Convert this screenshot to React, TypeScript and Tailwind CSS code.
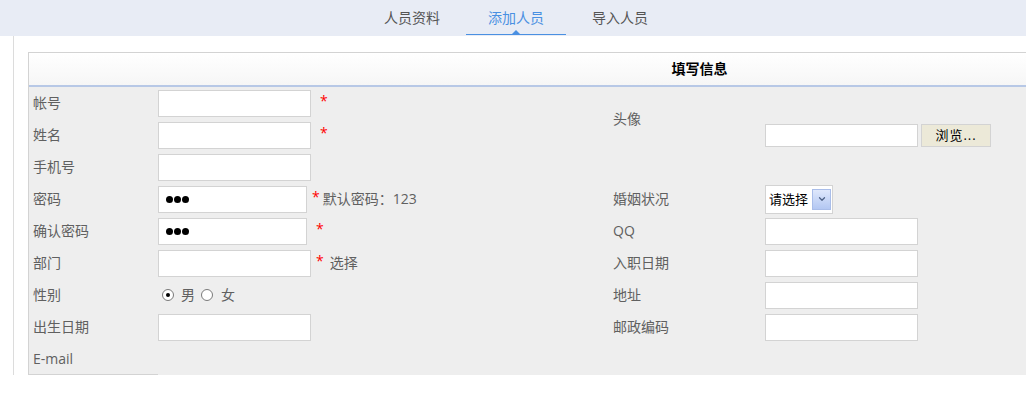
import { ChevronDown } from "lucide-react";
import type { ReactNode } from "react";

const rowStart = [
  "row-start-1",
  "row-start-2",
  "row-start-3",
  "row-start-4",
  "row-start-5",
  "row-start-6",
  "row-start-7",
  "row-start-8",
  "row-start-9",
];

const tabs = ["人员资料", "添加人员", "导入人员"];

const Label = ({ row, right, children, last }: { row: number; right?: boolean; children: ReactNode; last?: boolean }) => (
  <div
    className={`${right ? "col-start-3" : "col-start-1"} ${rowStart[row - 1]} flex items-center pl-[4px] ${
      last ? "border-b border-[#d3d3d3]" : ""
    }`}
  >
    {children}
  </div>
);

const Cell = ({ row, right, children }: { row: number; right?: boolean; children: ReactNode }) => (
  <div className={`${right ? "col-start-4" : "col-start-2"} ${rowStart[row - 1]} flex items-center`}>{children}</div>
);

const TextBox = ({ narrow }: { narrow?: boolean }) => (
  <input
    readOnly
    className={`${narrow ? "w-[149px]" : "w-[153px]"} h-[27px] border border-[#d3d3d3] bg-white outline-none`}
  />
);

const Star = ({ className = "" }: { className?: string }) => (
  <span className={`relative -top-[2px] text-[#ff0000] ${className}`}>*</span>
);

const Password = () => (
  <div className="w-[149px] h-[27px] border border-[#d3d3d3] bg-white flex items-center gap-[1px] pl-[7px]">
    <span className="w-[7px] h-[7px] rounded-full bg-black" />
    <span className="w-[7px] h-[7px] rounded-full bg-black" />
    <span className="w-[7px] h-[7px] rounded-full bg-black" />
  </div>
);

const Radio = ({ checked }: { checked?: boolean }) => (
  <span className="w-[12px] h-[12px] rounded-full border border-[#7a7a7a] bg-white flex items-center justify-center">
    {checked && <span className="w-[4px] h-[4px] rounded-full bg-black" />}
  </span>
);

export default function App() {
  return (
    <div className="w-[1026px] h-[396px] overflow-hidden bg-white font-['Open_Sans','Noto_Sans_CJK_SC',sans-serif] text-[14px] leading-[20px] text-[#606060]">
      {/* tabs */}
      <nav className="h-[36px] bg-[#e8ecf5] flex pl-[362px] gap-[4px]">
        {tabs.map((t, i) => (
          <div
            key={t}
            className={`relative w-[100px] h-full flex items-center justify-center ${
              i === 1 ? "text-[#4a90e2]" : "text-[#555]"
            }`}
          >
            {t}
            {i === 1 && (
              <>
                <span className="absolute left-0 right-0 bottom-[1px] h-[1px] bg-[#4a90e2]" />
                <span className="absolute bottom-[2px] left-1/2 -translate-x-1/2 border-l-[4px] border-r-[4px] border-b-[4px] border-l-transparent border-r-transparent border-b-[#4a90e2]" />
              </>
            )}
          </div>
        ))}
      </nav>

      <div className="flex">
        <div className="w-[13px] shrink-0" />
        <div className="shrink-0 border-l border-[#dcdcdc] pl-[14px] pt-[16px]">
          <div className="w-[1342px] border-l border-t border-[#d3d3d3]">
            <div className="h-[34px] bg-gradient-to-b from-white to-[#f6f6f6] border-b-2 border-[#b7c8e6] flex items-center justify-center font-bold text-black">
              填写信息
            </div>

            <div className="grid grid-cols-[129px_451px_156px_1fr] grid-rows-[repeat(9,32px)] bg-[#eeeeee]">
              {/* left column */}
              <Label row={1}>帐号</Label>
              <Cell row={1}>
                <TextBox />
                <Star className="ml-[9px]" />
              </Cell>
              <Label row={2}>姓名</Label>
              <Cell row={2}>
                <TextBox />
                <Star className="ml-[9px]" />
              </Cell>
              <Label row={3}>手机号</Label>
              <Cell row={3}>
                <TextBox />
              </Cell>
              <Label row={4}>密码</Label>
              <Cell row={4}>
                <Password />
                <Star className="ml-[5px]" />
                <span className="ml-[3px]">默认密码：123</span>
              </Cell>
              <Label row={5}>确认密码</Label>
              <Cell row={5}>
                <Password />
                <Star className="ml-[9px]" />
              </Cell>
              <Label row={6}>部门</Label>
              <Cell row={6}>
                <TextBox />
                <Star className="ml-[5px]" />
                <span className="ml-[6px]">选择</span>
              </Cell>
              <Label row={7}>性别</Label>
              <Cell row={7}>
                <span className="ml-[4px]">
                  <Radio checked />
                </span>
                <span className="ml-[7px]">男</span>
                <span className="ml-[6px]">
                  <Radio />
                </span>
                <span className="ml-[8px]">女</span>
              </Cell>
              <Label row={8}>出生日期</Label>
              <Cell row={8}>
                <TextBox />
              </Cell>
              <Label row={9} last>
                E-mail
              </Label>

              {/* right column */}
              <div className="col-start-3 row-start-1 row-span-2 flex items-center pl-[4px]">头像</div>
              <div className="col-start-4 row-start-1 row-span-3 flex items-center">
                <input readOnly className="w-[153px] h-[23px] border border-[#d3d3d3] bg-white outline-none" />
                <button className="ml-[3px] w-[70px] h-[23px] bg-[#ece9d8] border border-[#d3d3d3] text-black text-[13px] leading-none tracking-[1px]">
                  浏览...
                </button>
              </div>
              <Label row={4} right>
                婚姻状况
              </Label>
              <Cell row={4} right>
                <div className="w-[68px] h-[29px] border border-[#d3d3d3] bg-white flex items-center pl-[3px] pr-[1px] text-black text-[13px]">
                  请选择
                  <span className="ml-auto w-[19px] h-[21px] bg-gradient-to-b from-[#dfe8fc] to-[#b3c7f2] border border-[#a9bde9] flex items-center justify-center text-[#4d6185]">
                    <ChevronDown size={10} strokeWidth={3} />
                  </span>
                </div>
              </Cell>
              <Label row={5} right>
                QQ
              </Label>
              <Cell row={5} right>
                <TextBox />
              </Cell>
              <Label row={6} right>
                入职日期
              </Label>
              <Cell row={6} right>
                <TextBox />
              </Cell>
              <Label row={7} right>
                地址
              </Label>
              <Cell row={7} right>
                <TextBox />
              </Cell>
              <Label row={8} right>
                邮政编码
              </Label>
              <Cell row={8} right>
                <TextBox />
              </Cell>
            </div>
          </div>
        </div>
      </div>
    </div>
  );
}
